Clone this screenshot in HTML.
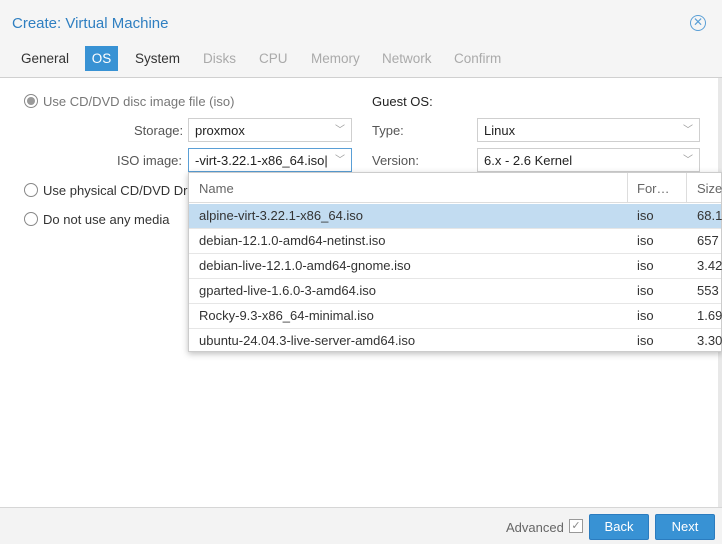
<!DOCTYPE html>
<html><head><meta charset="utf-8"><style>
*{box-sizing:border-box;margin:0;padding:0}
body{width:722px;height:544px;overflow:hidden;background:#fff;font-family:"Liberation Sans",Arial,sans-serif;font-size:13px;color:#333;position:relative}
.hdr{position:absolute;left:0;top:0;width:722px;height:78px;background:#f5f5f5;border-bottom:1px solid #d0d0d0}
.title{position:absolute;left:12px;top:15px;font-size:15px;color:#2f7fc1}
.close{position:absolute;left:690px;top:15px;width:16px;height:16px;border:1px solid #5a9fd6;border-radius:50%;color:#5a9fd6;font-size:12px;line-height:13px;text-align:center}
.tab{position:absolute;top:51px;font-size:13.5px}
.dis{color:#aaa}
.os{position:absolute;left:85px;top:46px;width:33px;height:25px;background:#3892d4;color:#fff;text-align:center;line-height:25px;font-size:13.5px}
.t{position:absolute;font-size:13px}
.lbl{color:#555}
.radio{position:absolute;width:14px;height:14px;border:1px solid #888;border-radius:50%;background:#fff}
.radio.on::after{content:"";position:absolute;left:2px;top:2px;width:8px;height:8px;border-radius:50%;background:#999}
.field{position:absolute;height:24px;border:1px solid #cfcfcf;background:#fff;padding-left:6px;line-height:23px;font-size:13px;color:#222}
.field .arr{position:absolute;right:6px;top:0;color:#999;font-size:10px}
.pop{position:absolute;left:188px;top:172px;width:534px;height:180px;background:#fff;border:1px solid #ccc;box-shadow:0 2px 6px rgba(0,0,0,.25)}
.ph{position:absolute;left:0;top:0;width:100%;height:30px;border-bottom:1px solid #ddd;color:#666}
.row{position:absolute;left:0;width:100%;height:25px;border-bottom:1px solid #e6e6e6;line-height:24px}
.row span{position:absolute}
.foot{position:absolute;left:0;top:507px;width:722px;height:37px;background:#f3f3f3;border-top:1px solid #d6d6d6}
.btn{position:absolute;top:514px;height:26px;background:#3892d4;border:1px solid #2b7cbf;border-radius:2px;color:#fff;text-align:center;line-height:24px;font-size:13px}
</style></head><body>
<div class="hdr">
<div class="title">Create: Virtual Machine</div>
<div class="close">✕</div>
<div class="tab" style="left:21px">General</div>
<div class="os">OS</div>
<div class="tab" style="left:135px">System</div>
<div class="tab dis" style="left:203px">Disks</div>
<div class="tab dis" style="left:259px">CPU</div>
<div class="tab dis" style="left:311px">Memory</div>
<div class="tab dis" style="left:382px">Network</div>
<div class="tab dis" style="left:454px">Confirm</div>
</div>
<div style="position:absolute;left:718px;top:78px;width:4px;height:430px;background:#e8e8e8"></div>

<div class="radio on" style="left:24px;top:94px"></div>
<div class="t" style="left:43px;top:94px;color:#777">Use CD/DVD disc image file (iso)</div>
<div class="t lbl" style="left:134px;top:123px">Storage:</div>
<div class="field" style="left:188px;top:118px;width:164px">proxmox<span class="arr">﹀</span></div>
<div class="t lbl" style="left:117px;top:153px">ISO image:</div>
<div class="field" style="left:188px;top:148px;width:164px;border-color:#5a9fd6">-virt-3.22.1-x86_64.iso|<span class="arr">﹀</span></div>
<div class="radio" style="left:24px;top:183px"></div>
<div class="t" style="left:43px;top:183px">Use physical CD/DVD Dr</div>
<div class="radio" style="left:24px;top:212px"></div>
<div class="t" style="left:43px;top:212px">Do not use any media</div>

<div class="t" style="left:372px;top:94px;color:#222">Guest OS:</div>
<div class="t lbl" style="left:372px;top:123px">Type:</div>
<div class="field" style="left:477px;top:118px;width:223px">Linux<span class="arr">﹀</span></div>
<div class="t lbl" style="left:372px;top:153px">Version:</div>
<div class="field" style="left:477px;top:148px;width:223px">6.x - 2.6 Kernel<span class="arr">﹀</span></div>

<div class="pop">
<div class="ph"><span style="position:absolute;left:10px;top:8px">Name</span>
<div style="position:absolute;left:438px;top:0;width:1px;height:30px;background:#ddd"></div>
<span style="position:absolute;left:448px;top:8px">For…</span>
<div style="position:absolute;left:497px;top:0;width:1px;height:30px;background:#ddd"></div>
<span style="position:absolute;left:508px;top:8px">Size</span></div>
<div class="row" style="top:31px;background:#c2dcf1"><span style="left:10px">alpine-virt-3.22.1-x86_64.iso</span><span style="left:448px">iso</span><span style="left:508px">68.1</span></div>
<div class="row" style="top:56px"><span style="left:10px">debian-12.1.0-amd64-netinst.iso</span><span style="left:448px">iso</span><span style="left:508px">657</span></div>
<div class="row" style="top:81px"><span style="left:10px">debian-live-12.1.0-amd64-gnome.iso</span><span style="left:448px">iso</span><span style="left:508px">3.42</span></div>
<div class="row" style="top:106px"><span style="left:10px">gparted-live-1.6.0-3-amd64.iso</span><span style="left:448px">iso</span><span style="left:508px">553</span></div>
<div class="row" style="top:131px"><span style="left:10px">Rocky-9.3-x86_64-minimal.iso</span><span style="left:448px">iso</span><span style="left:508px">1.69</span></div>
<div class="row" style="top:156px;border:none"><span style="left:10px">ubuntu-24.04.3-live-server-amd64.iso</span><span style="left:448px">iso</span><span style="left:508px">3.30</span></div>
</div>

<div class="foot"></div>
<div class="t" style="left:506px;top:520px;color:#666">Advanced</div>
<div style="position:absolute;left:569px;top:519px;width:14px;height:14px;border:1px solid #999;background:#fff;color:#888;font-size:11px;line-height:12px;text-align:center">✓</div>
<div class="btn" style="left:589px;width:60px">Back</div>
<div class="btn" style="left:655px;width:60px">Next</div>
</body></html>
